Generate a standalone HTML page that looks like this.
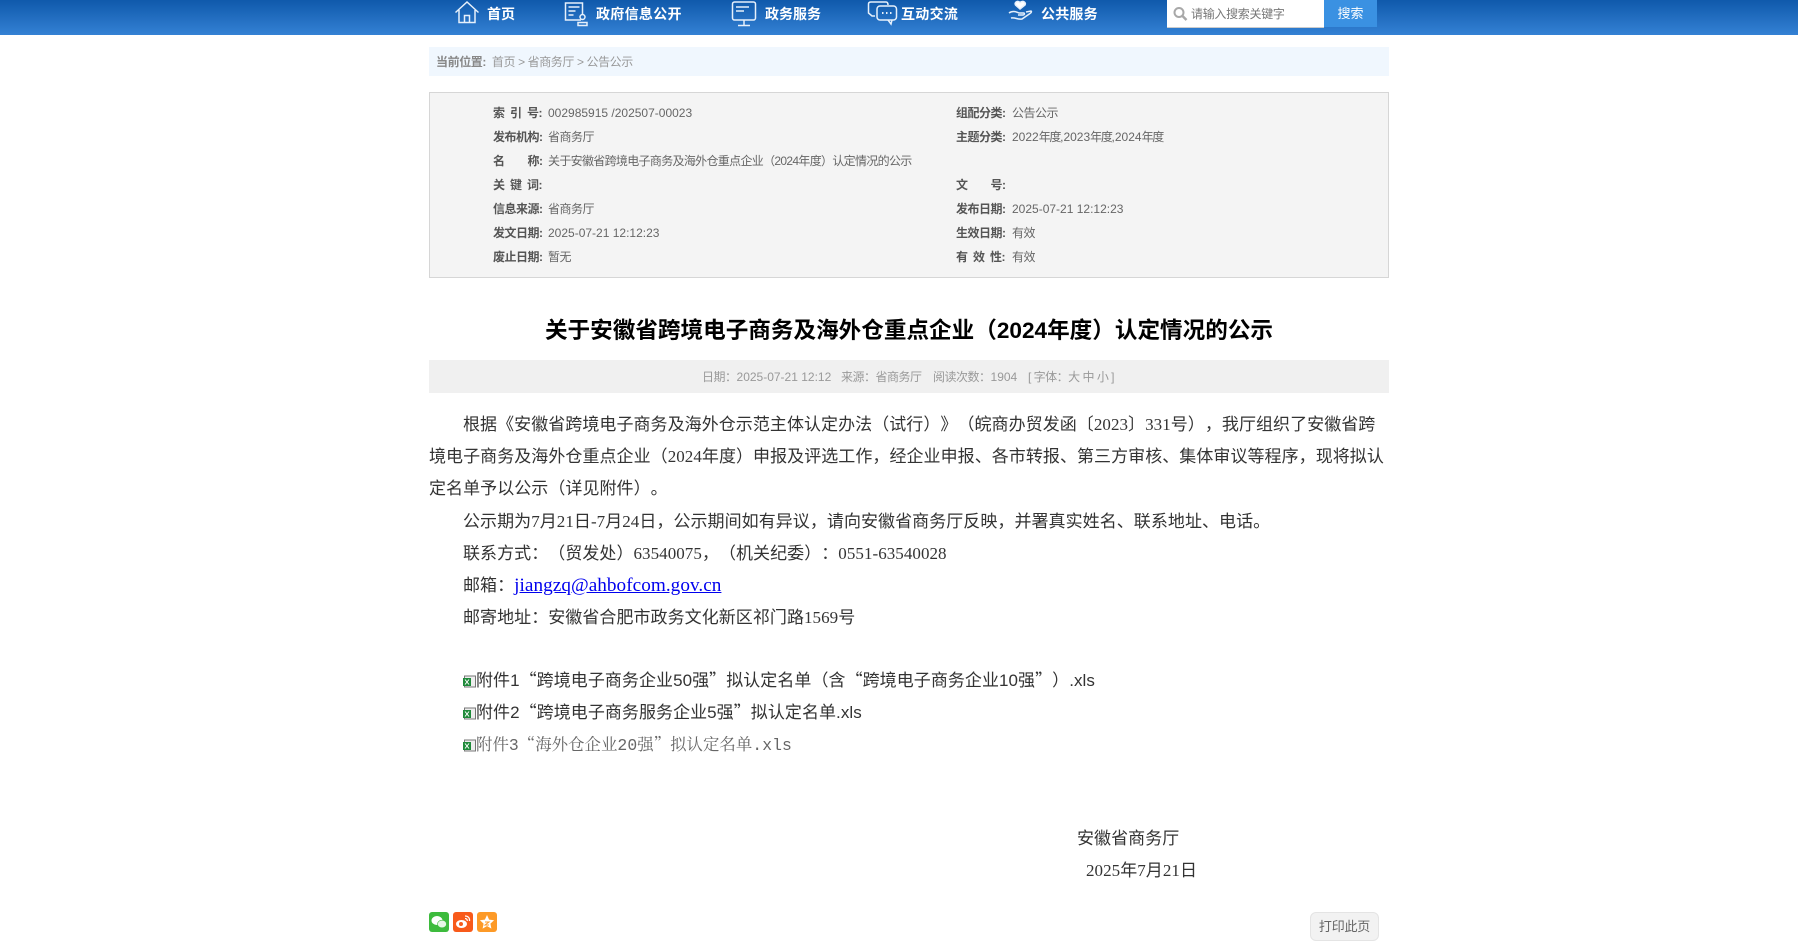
<!DOCTYPE html>
<html lang="zh-CN"><head><meta charset="utf-8"><title>公告公示</title>
<style>
html,body{margin:0;padding:0;background:#fff;}
body{position:relative;width:1798px;height:941px;overflow:hidden;font-family:"Liberation Sans","Noto Sans CJK SC",sans-serif;text-spacing-trim:space-all;}
.a{position:absolute;white-space:nowrap;}
#hd{position:absolute;left:0;top:0;width:1798px;height:35px;background:linear-gradient(#0f59ab,#3481d4);}
.n{position:absolute;top:5px;height:18px;line-height:18px;font-size:14px;font-weight:bold;color:#fff;white-space:nowrap;}
.ic{position:absolute;top:0;fill:none;stroke:#e6f0fb;stroke-width:1.5;}
.r{position:absolute;font-size:12px;line-height:24px;height:24px;color:#666;white-space:nowrap;}
.r b{color:#555;letter-spacing:-.5px;}
.r b.w{word-spacing:2.670px;}
.c{letter-spacing:-.5px;}
.y{letter-spacing:-1.300px;}
.b{position:absolute;left:429px;font-size:17px;line-height:32px;height:32px;color:#333;white-space:nowrap;letter-spacing:.05px;font-family:"Liberation Serif","Noto Sans CJK SC",serif;}
.s{font-family:"Liberation Sans","Noto Sans CJK SC",sans-serif;}
.q{font-family:"Noto Sans CJK SC",sans-serif;}
</style></head><body>
<div id="hd"></div>
<svg class="ic" style="left:454px" width="26" height="26" viewBox="0 0 26 26"><path d="M1.500 12.500 13 2l11.500 10.500M5 10v12.500h16V10M10.500 22.500V15.500h5v7"/></svg>
<div class="n" style="left:487px">首页</div>
<svg class="ic" style="left:564px" width="26" height="28" viewBox="0 0 26 28"><path d="M17 20H1.500V3h17v12M4.500 7h11M4.500 11h7M4.500 15h5"/><circle cx="18.500" cy="17" r="2.500"/><path d="M14 25.500v-3h9v3z"/></svg>
<div class="n" style="left:596px;letter-spacing:.3px">政府信息公开</div>
<svg class="ic" style="left:731px" width="27" height="27" viewBox="0 0 27 27"><rect x="1.500" y="2" width="23" height="18" rx="2"/><path d="M5 7h13M5 11h8M13 20v5M7 25.500h12"/></svg>
<div class="n" style="left:765px">政务服务</div>
<svg class="ic" style="left:867px" width="31" height="26" viewBox="0 0 31 26"><path d="M8 16H5L1.500 13V4Q1.500 2 4 2H19Q21 2 21 5"/><rect x="10" y="6" width="19.500" height="14" rx="3"/><path d="M21 20l3 4 1-4"/><path d="M15 13h1.500M19 13h1.500M23 13h1.500" stroke-width="2"/></svg>
<div class="n" style="left:901px;letter-spacing:.3px">互动交流</div>
<svg class="ic" style="left:1008px" width="25" height="24" viewBox="0 0 25 24"><path d="M12 9 7.500 5C6 2.500 9.500 0 12 2.500 15 0 18.500 2.500 17 5z" fill="#fff"/><path d="M1 13c4-3 8-1 10 0h5c1 1 0 2-1 2H10M18 12l5-1c1 .5 0 2-1 2.500L14 19c-4 1-7-2-11-1"/></svg>
<div class="n" style="left:1041px;letter-spacing:.2px">公共服务</div>
<div class="a" style="left:1167px;top:0;width:157px;height:27px;background:#fff;border-bottom:1px solid #ccc;"></div>
<svg class="a" style="left:1173px;top:6px" width="15" height="16" viewBox="0 0 15 16" fill="none" stroke="#a8a8a8" stroke-width="2"><circle cx="6" cy="6.500" r="4.500"/><path d="M9.500 10l4 4" stroke-width="2.500"/></svg>
<div class="a" style="left:1191px;top:5px;line-height:18px;font-size:12px;color:#777;letter-spacing:-.3px;">请输入搜索关键字</div>
<div class="a" style="left:1324px;top:0;width:53px;height:27px;line-height:27px;background:#3a91e2;color:#fff;font-size:13px;text-align:center;">搜索</div>

<div class="a" style="left:429px;top:47px;width:960px;height:29px;background:#f0f7fe;"></div>
<div class="a" style="left:436px;top:53px;font-size:12px;line-height:18px;color:#999;letter-spacing:-.4px;"><b style="color:#888;margin-right:3px">当前位置:</b> 首页 &gt; 省商务厅 &gt; 公告公示</div>

<div class="a" style="left:429px;top:92px;width:958px;height:184px;background:#f4f4f4;border:1px solid #d6d6d6;"></div>
<div class="r" style="left:493px;top:101px"><b class="w">索 引 号:</b></div><div class="r" style="left:548px;top:101px">002985915 /202507-00023</div>
<div class="r" style="left:493px;top:125px"><b>发布机构:</b></div><div class="r c" style="left:548px;top:125px">省商务厅</div>
<div class="r" style="left:493px;top:149px"><b>名&emsp;&emsp;称:</b></div><div class="r" style="left:548px;top:149px;letter-spacing:-.68px">关于安徽省跨境电子商务及海外仓重点企业（2024年度）认定情况的公示</div>
<div class="r" style="left:493px;top:173px"><b class="w">关 键 词:</b></div>
<div class="r" style="left:493px;top:197px"><b>信息来源:</b></div><div class="r c" style="left:548px;top:197px">省商务厅</div>
<div class="r" style="left:493px;top:221px"><b>发文日期:</b></div><div class="r" style="left:548px;top:221px">2025-07-21 12:12:23</div>
<div class="r" style="left:493px;top:245px"><b>废止日期:</b></div><div class="r c" style="left:548px;top:245px">暂无</div>
<div class="r" style="left:956px;top:101px"><b>组配分类:</b></div><div class="r c" style="left:1012px;top:101px">公告公示</div>
<div class="r" style="left:956px;top:125px"><b>主题分类:</b></div><div class="r" style="left:1012px;top:125px">2022<span class="y">年度</span>,2023<span class="y">年度</span>,2024<span class="y">年度</span></div>
<div class="r" style="left:956px;top:173px"><b>文&emsp;&emsp;号:</b></div>
<div class="r" style="left:956px;top:197px"><b>发布日期:</b></div><div class="r" style="left:1012px;top:197px">2025-07-21 12:12:23</div>
<div class="r" style="left:956px;top:221px"><b>生效日期:</b></div><div class="r c" style="left:1012px;top:221px">有效</div>
<div class="r" style="left:956px;top:245px"><b class="w">有 效 性:</b></div><div class="r c" style="left:1012px;top:245px">有效</div>

<div class="a" style="left:429px;top:314px;width:960px;text-align:center;font-size:22.600px;line-height:34px;font-weight:bold;color:#000;">关于安徽省跨境电子商务及海外仓重点企业（2024年度）认定情况的公示</div>
<div class="a" style="left:429px;top:360px;width:960px;height:33px;background:#f0f0f0;"></div>
<div class="a" style="left:702px;top:368px;font-size:12px;line-height:18px;color:#999;"><span class="c">日期：</span>2025-07-21 12:12</div>
<div class="a" style="left:841px;top:368px;font-size:12px;line-height:18px;color:#999;letter-spacing:-.5px;">来源：省商务厅</div>
<div class="a" style="left:933px;top:368px;font-size:12px;line-height:18px;color:#999;"><span class="c">阅读次数：</span>1904</div>
<div class="a" style="left:1028px;top:368px;font-size:12px;line-height:18px;color:#999;letter-spacing:-.5px;">[ 字体：大 中 小 ]</div>

<div class="b" style="left:463px;top:409px">根据《安徽省跨境电子商务及海外仓示范主体认定办法（试行）》（皖商办贸发函〔2023〕331号），我厅组织了安徽省跨</div>
<div class="b" style="top:441px">境电子商务及海外仓重点企业（2024年度）申报及评选工作，经企业申报、各市转报、第三方审核、集体审议等程序，现将拟认</div>
<div class="b" style="top:473px">定名单予以公示（详见附件）。</div>
<div class="b" style="left:463px;top:506px">公示期为7月21日-7月24日，公示期间如有异议，请向安徽省商务厅反映，并署真实姓名、联系地址、电话。</div>
<div class="b" style="left:463px;top:538px">联系方式：（贸发处）63540075，（机关纪委）：0551-63540028</div>
<div class="b" style="left:463px;top:570px">邮箱：<span style="color:#00e;text-decoration:underline;font-size:19.200px">jiangzq@ahbofcom.gov.cn</span></div>
<div class="b" style="left:463px;top:602px">邮寄地址：安徽省合肥市政务文化新区祁门路1569号</div>

<svg class="a" style="left:463px;top:675px" width="13" height="13" viewBox="0 0 13 13"><rect x="1.500" y="1" width="11" height="11" fill="#eee" stroke="#777"/><rect x="0" y="3" width="8" height="8" fill="#1f8a3a"/><path d="M2 4.500l4 5M6 4.500l-4 5" stroke="#fff" fill="none"/></svg>
<div class="b s" style="left:476px;top:663px">附件1<span class="q">“</span>跨境电子商务企业50强<span class="q">”</span>拟认定名单（含<span class="q">“</span>跨境电子商务企业10强<span class="q">”</span>）.xls</div>
<svg class="a" style="left:463px;top:707px" width="13" height="13" viewBox="0 0 13 13"><rect x="1.500" y="1" width="11" height="11" fill="#eee" stroke="#777"/><rect x="0" y="3" width="8" height="8" fill="#1f8a3a"/><path d="M2 4.500l4 5M6 4.500l-4 5" stroke="#fff" fill="none"/></svg>
<div class="b s" style="left:476px;top:695px">附件2<span class="q">“</span>跨境电子商务服务企业5强<span class="q">”</span>拟认定名单.xls</div>
<svg class="a" style="left:463px;top:739px" width="13" height="13" viewBox="0 0 13 13"><rect x="1.500" y="1" width="11" height="11" fill="#eee" stroke="#777"/><rect x="0" y="3" width="8" height="8" fill="#1f8a3a"/><path d="M2 4.500l4 5M6 4.500l-4 5" stroke="#fff" fill="none"/></svg>
<div class="b" style="left:476px;top:727px;font-size:16.400px;color:#666;font-family:'Liberation Mono','Noto Serif CJK SC',serif;">附件3<span style="font-family:'Noto Serif CJK SC',serif">“</span>海外仓企业20强<span style="font-family:'Noto Serif CJK SC',serif">”</span>拟认定名单.xls</div>

<div class="b" style="left:1077px;top:823px">安徽省商务厅</div>
<div class="b" style="left:1086px;top:855px">2025年7月21日</div>

<svg class="a" style="left:429px;top:912px" width="20" height="20" viewBox="0 0 20 20"><rect width="20" height="20" rx="3" fill="#3dbb3d"/><ellipse cx="8" cy="8.500" rx="5.500" ry="4.500" fill="#fff"/><ellipse cx="13" cy="12" rx="4.500" ry="3.800" fill="#e6f7e6" stroke="#3dbb3d" stroke-width=".6"/></svg>
<svg class="a" style="left:453px;top:912px" width="20" height="20" viewBox="0 0 20 20"><rect width="20" height="20" rx="3" fill="#f85a1a"/><ellipse cx="8.500" cy="12" rx="5.500" ry="4" fill="#fff"/><circle cx="8" cy="12" r="2" fill="#f85a1a"/><path d="M12 4c3 0 5 2 4.500 5M12 6.500c1.500 0 2.500 1 2.200 2.500" fill="none" stroke="#fff" stroke-width="1.200"/></svg>
<svg class="a" style="left:477px;top:912px" width="20" height="20" viewBox="0 0 20 20"><rect width="20" height="20" rx="3" fill="#fd9a27"/><path d="M10 3l2.100 4.600 5 .6-3.700 3.400 1 5L10 14l-4.400 2.600 1-5L2.900 8.200l5-.6z" fill="#fff"/><path d="M8 10h4l-4 3h4" fill="none" stroke="#fd9a27"/></svg>
<div class="a" style="left:1310px;top:912px;width:67px;height:27px;line-height:27px;background:#f2f2f2;border:1px solid #e4e4e4;border-radius:6px;text-align:center;font-size:13px;color:#666;letter-spacing:-.2px;">打印此页</div>
</body></html>
